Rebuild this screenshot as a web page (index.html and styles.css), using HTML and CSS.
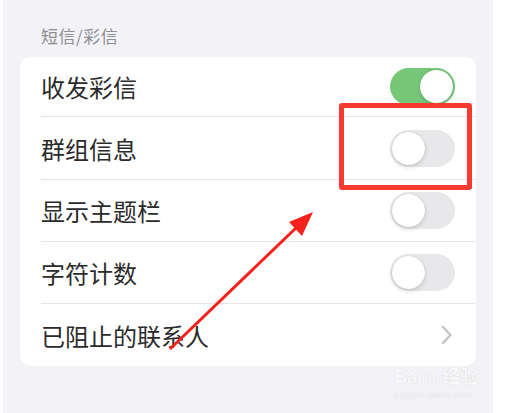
FILE: index.html
```html
<!DOCTYPE html>
<html lang="zh-CN">

<head>
    <meta charset="UTF-8">
    <title>短信/彩信</title>
    <link rel="stylesheet" href="styles.css">
</head>

<body>
<div class="screen">
    <div class="group-title">短信/彩信</div>
    <div class="card">
        <div class="row">
            <span class="label">收发彩信</span>
            <span class="switch on"><i></i></span>
        </div>
        <div class="row">
            <span class="label">群组信息</span>
            <span class="switch"><i></i></span>
        </div>
        <div class="row">
            <span class="label">显示主题栏</span>
            <span class="switch"><i></i></span>
        </div>
        <div class="row">
            <span class="label">字符计数</span>
            <span class="switch"><i></i></span>
        </div>
        <div class="row">
            <span class="label">已阻止的联系人</span>
            <svg class="chevron" width="12" height="20" viewBox="0 0 12 20">
                <path d="M2 2 L9.5 10 L2 18" fill="none" stroke="#c4c4c7" stroke-width="2.4" stroke-linecap="round" stroke-linejoin="round"/>
            </svg>
        </div>
    </div>

    <!-- 标注 -->
    <div class="mark-box"></div>
    <svg class="mark-arrow" width="514" height="413" viewBox="0 0 514 413">
        <line x1="170" y1="349" x2="298" y2="226" stroke="#f5221b" stroke-width="3"/>
        <polygon points="313,212 289,222 302,236" fill="#f5221b"/>
    </svg>

    <div class="watermark">
        <div class="wm-logo">Bai<span class="paw">du</span>经验</div>
        <div class="wm-url">jingyan.baidu.com</div>
    </div>
</div>
</body>

</html>
```

FILE: styles.css
```css
* {
    margin: 0;
    padding: 0;
    box-sizing: border-box;
}

body {
    background: #fff;
    font-family: "Noto Sans CJK SC", "Noto Sans", sans-serif;
}

.screen {
    position: relative;
    width: 490px;
    height: 413px;
    margin-left: 3px;
    background: #f2f2f7;
    padding: 22px 17px 0;
}

.group-title {
    padding-left: 21px;
    height: 35px;
    font-size: 17px;
    line-height: 28px;
    color: #8e8e93;
    word-spacing: 0;
}

.group-title::first-line {
    letter-spacing: 0.5px;
}

.card {
    background: #fff;
    border-radius: 11px;
    overflow: hidden;
}

.row {
    display: flex;
    align-items: center;
    justify-content: space-between;
    height: 62px;
    margin-left: 21px;
    padding-right: 21px;
    border-bottom: 1px solid #e6e6e9;
}

.row:first-child {
    height: 60px;
}

.row:nth-child(2) {
    height: 63px;
}

.row:last-child {
    border-bottom: 0;
}

.label {
    font-size: 24px;
    color: #2b2b2b;
}

.switch {
    position: relative;
    width: 65px;
    height: 37px;
    border-radius: 19px;
    background: #e8e8ea;
}

.switch i {
    position: absolute;
    top: 2px;
    left: 2px;
    width: 33px;
    height: 33px;
    border-radius: 50%;
    background: #fff;
    box-shadow: 0 2px 5px rgba(0, 0, 0, 0.15), 0 0 1px rgba(0, 0, 0, 0.2);
}

.switch.on {
    background: #76c878;
}

.switch.on i {
    left: 30px;
}

.chevron {
    margin-right: 2px;
}

.mark-box {
    position: absolute;
    left: 336px;
    top: 103px;
    width: 133px;
    height: 87px;
    border: 5px solid #f53b30;
    border-radius: 3px;
}

.mark-arrow {
    position: absolute;
    left: -3px;
    top: 0;
}

.watermark {
    position: absolute;
    left: 391px;
    top: 367px;
    color: rgba(255, 255, 255, 0.9);
    text-shadow: 0 0 1px rgba(0, 0, 0, 0.18);
    font-family: "Liberation Sans", "Noto Sans CJK SC", sans-serif;
}

.wm-logo {
    font-size: 18px;
    font-weight: bold;
    line-height: 20px;
}

.wm-logo .paw {
    font-size: 13px;
    margin: 0 2px;
}

.wm-url {
    font-size: 9px;
    line-height: 12px;
    letter-spacing: 0.3px;
}
```
